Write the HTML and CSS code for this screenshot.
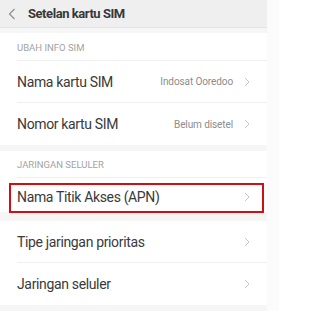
FILE: index.html
```html
<!DOCTYPE html>
<html lang="id">
<head>
<meta charset="utf-8">
<title>Setelan kartu SIM</title>
<link rel="stylesheet" href="styles.css">
</head>
<body>
<div class="screen">
  <div class="panel">
    <header class="topbar">
      <svg class="back" width="8" height="12" viewBox="0 0 8 12"><path d="M6.5 1 L1.5 6 L6.5 11" fill="none" stroke="#8a8a8a" stroke-width="1.1"/></svg>
      <span class="title">Setelan kartu SIM</span>
    </header>
    <div class="band band-top"></div>
    <section class="group">
      <div class="label">UBAH INFO SIM</div>
      <div class="row">
        <span class="name">Nama kartu SIM</span>
        <span class="value">Indosat Ooredoo</span>
        <svg class="chev" width="6" height="10" viewBox="0 0 6 10"><path d="M1 1 L5 5 L1 9" fill="none" stroke="#c6c6c6" stroke-width="1"/></svg>
      </div>
      <div class="row">
        <span class="name">Nomor kartu SIM</span>
        <span class="value">Belum disetel</span>
        <svg class="chev" width="6" height="10" viewBox="0 0 6 10"><path d="M1 1 L5 5 L1 9" fill="none" stroke="#c6c6c6" stroke-width="1"/></svg>
      </div>
    </section>
    <div class="band"></div>
    <section class="group">
      <div class="label label-b">JARINGAN SELULER</div>
      <div class="row row-apn">
        <span class="name">Nama Titik Akses (APN)</span>
        <svg class="chev" width="6" height="10" viewBox="0 0 6 10"><path d="M1 1 L5 5 L1 9" fill="none" stroke="#c6c6c6" stroke-width="1"/></svg>
        <div class="highlight"></div>
      </div>
    </section>
    <div class="band band-mid"></div>
    <section class="group">
      <div class="row">
        <span class="name">Tipe jaringan prioritas</span>
        <svg class="chev" width="6" height="10" viewBox="0 0 6 10"><path d="M1 1 L5 5 L1 9" fill="none" stroke="#c6c6c6" stroke-width="1"/></svg>
      </div>
      <div class="row">
        <span class="name">Jaringan seluler</span>
        <svg class="chev" width="6" height="10" viewBox="0 0 6 10"><path d="M1 1 L5 5 L1 9" fill="none" stroke="#c6c6c6" stroke-width="1"/></svg>
      </div>
    </section>
    <div class="band band-bottom"></div>
  </div>
  <div class="edge"></div>
</div>
</body>
</html>
```
FILE: styles.css
```css
* { box-sizing: border-box; }
html, body { margin: 0; padding: 0; background: #ffffff; }
body { font-family: Roboto, "Noto Sans", sans-serif; }

.screen { display: flex; width: 279px; height: 311px; overflow: hidden; }
.panel { width: 267px; display: flex; flex-direction: column; background: #ffffff; }
.edge { flex: 1; background: #fbfbfb; }

.topbar {
  height: 28px;
  background: #efefef;
  border-bottom: 1px solid #e3e3e3;
  display: flex;
  align-items: center;
  padding-left: 8px;
}
.back { display: block; margin-top: 1px; }
.title {
  margin-left: 12px;
  font-size: 13px;
  font-weight: 700;
  color: #383838;
  letter-spacing: -0.45px;
}

.band { height: 6px; background: #f6f6f6; }
.band-top { height: 5px; }
.band-mid { height: 9px; }
.band-bottom { flex: 1; height: auto; }

.group { display: flex; flex-direction: column; padding-left: 17px; }
.label {
  height: 28px;
  display: flex;
  align-items: center;
  font-size: 9.5px;
  color: #a3a3a3;
  border-bottom: 1px solid #efefef;
  padding-top: 1px;
}
.label-b { height: 27px; }

.row {
  position: relative;
  height: 42px;
  display: flex;
  align-items: center;
  padding-right: 17px;
  border-bottom: 1px solid #efefef;
}
.row:last-child { border-bottom: none; }
.row-apn { height: 34px; padding-top: 4px; }

.name {
  flex: 1;
  font-size: 14px;
  color: #3a3a3a;
  letter-spacing: -0.35px;
}
.value {
  font-size: 10px;
  color: #8c8c8c;
  margin-right: 11px;
  letter-spacing: -0.1px;
}
.chev { display: block; }

.highlight {
  position: absolute;
  left: -8px;
  right: 3px;
  top: 5px;
  bottom: -1px;
  border: 2px solid #d40d12;
  pointer-events: none;
}
```
